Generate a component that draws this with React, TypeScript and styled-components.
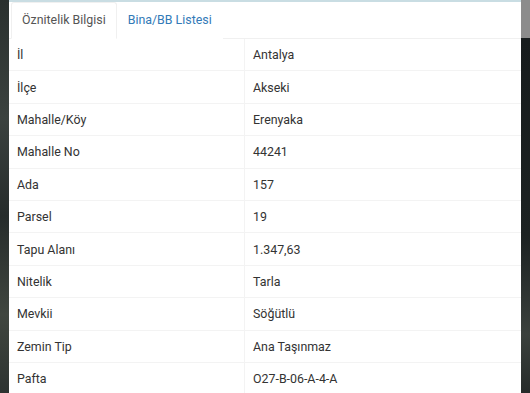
import styled, { createGlobalStyle } from 'styled-components';

const GlobalStyle = createGlobalStyle`
  html, body {
    margin: 0;
    padding: 0;
    width: 530px;
    height: 393px;
    overflow: hidden;
    background: #1b2120;
  }
`;

const Screen = styled.div`
  display: grid;
  grid-template-columns: 9px 512px 9px;
  width: 530px;
  height: 393px;
  overflow: hidden;
  font-family: Roboto, 'Liberation Sans', sans-serif;
`;

const MapEdge = styled.div<{ $side: 'left' | 'right' }>`
  height: 393px;
  background: ${(p) =>
    p.$side === 'left'
      ? 'linear-gradient(180deg, #2a302e 0%, #3b423f 30%, #262c2b 55%, #40463f 80%, #2d3331 100%)'
      : 'linear-gradient(180deg, #8c8c8c 0px, #8c8c8c 38px, #171c1d 38px, #1c2222 60%, #3a403c 85%, #262b2a 100%)'};
`;

const Panel = styled.div`
  background: #fff;
  border-top: 2px solid #c9dde3;
  display: flex;
  flex-direction: column;
  height: 393px;
  box-sizing: border-box;
`;

const TabBar = styled.div`
  display: flex;
  align-items: flex-end;
  height: 41px;
  padding: 0 2px;
  border-bottom: 1px solid #f0f0f0;
  box-sizing: border-box;
`;

const Tab = styled.div<{ $active?: boolean }>`
  height: 37px;
  display: flex;
  align-items: center;
  padding: 0 10px 3px;
  margin-bottom: -1px;
  font-size: 12.4px;
  color: ${(p) => (p.$active ? '#555' : '#337ab7')};
  background: #fff;
  border: 1px solid ${(p) => (p.$active ? '#f0f0f0' : 'transparent')};
  border-bottom-color: ${(p) => (p.$active ? '#fff' : 'transparent')};
  border-radius: 3px 3px 0 0;
  box-sizing: border-box;
`;

const Table = styled.div`
  display: flex;
  flex-direction: column;
`;

const Row = styled.div`
  display: grid;
  grid-template-columns: 235px 1fr;
  height: 32.4px;
  border-bottom: 1px solid #f3f3f3;
  box-sizing: border-box;
`;

const Cell = styled.div<{ $value?: boolean }>`
  display: flex;
  align-items: center;
  padding-left: 8px;
  font-size: 12.4px;
  color: #333;
  border-left: ${(p) => (p.$value ? '1px solid #f3f3f3' : 'none')};
`;

const rows: [string, string][] = [
  ['İl', 'Antalya'],
  ['İlçe', 'Akseki'],
  ['Mahalle/Köy', 'Erenyaka'],
  ['Mahalle No', '44241'],
  ['Ada', '157'],
  ['Parsel', '19'],
  ['Tapu Alanı', '1.347,63'],
  ['Nitelik', 'Tarla'],
  ['Mevkii', 'Söğütlü'],
  ['Zemin Tip', 'Ana Taşınmaz'],
  ['Pafta', 'O27-B-06-A-4-A'],
];

const App: React.FC = () => {
  return (
    <>
      <GlobalStyle />
      <Screen>
        <MapEdge $side="left" />
        <Panel>
          <TabBar>
            <Tab $active>Öznitelik Bilgisi</Tab>
            <Tab>Bina/BB Listesi</Tab>
          </TabBar>
          <Table>
            {rows.map(([label, value]) => (
              <Row key={label}>
                <Cell>{label}</Cell>
                <Cell $value>{value}</Cell>
              </Row>
            ))}
          </Table>
        </Panel>
        <MapEdge $side="right" />
      </Screen>
    </>
  );
};

export default App;
